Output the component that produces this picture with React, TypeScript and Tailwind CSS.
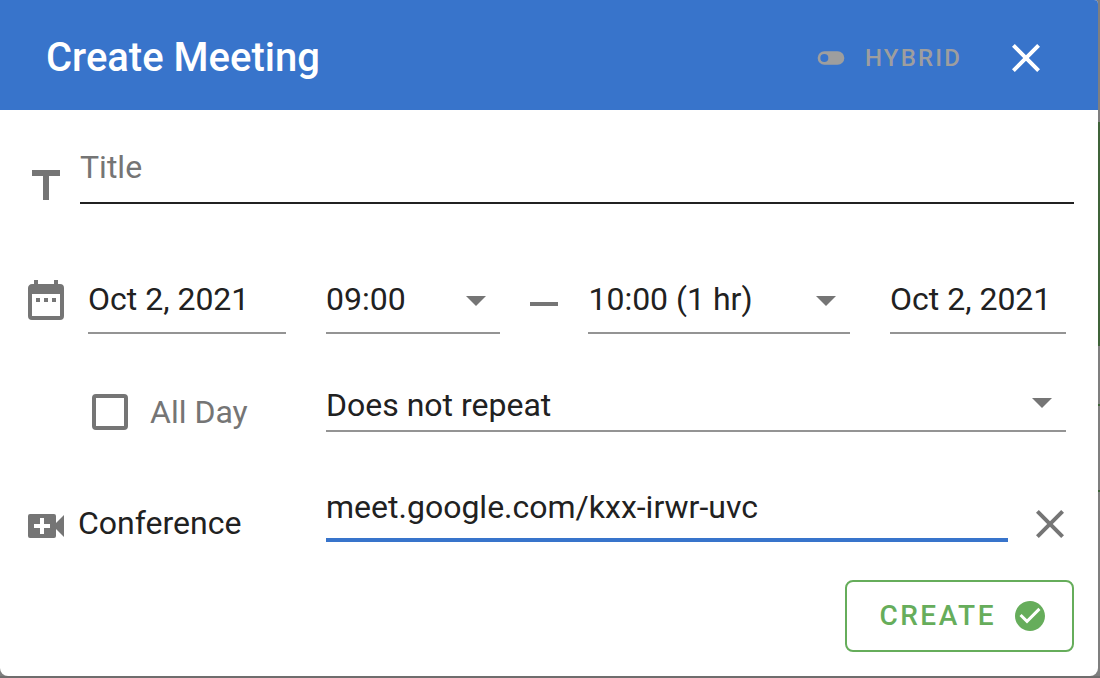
import { useState } from 'react';
import type { ReactNode } from 'react';
import clsx from 'clsx';

const ICONS = {
  close: 'M19,6.41L17.59,5L12,10.59L6.41,5L5,6.41L10.59,12L5,17.59L6.41,19L12,13.41L17.59,19L19,17.59L13.41,12L19,6.41Z',
  toggleOff: 'M17,7H7A5,5 0 0,0 2,12A5,5 0 0,0 7,17H17A5,5 0 0,0 22,12A5,5 0 0,0 17,7M7,15A3,3 0 0,1 4,12A3,3 0 0,1 7,9A3,3 0 0,1 10,12A3,3 0 0,1 7,15Z',
  title: 'M5,4V7H10.5V19H13.5V7H19V4H5Z',
  calendar: 'M9,10H7V12H9V10M13,10H11V12H13V10M17,10H15V12H17V10M19,3H18V1H16V3H8V1H6V3H5C3.89,3 3,3.9 3,5V19A2,2 0 0,0 5,21H19A2,2 0 0,0 21,19V5A2,2 0 0,0 19,3M19,19H5V8H19V19Z',
  minus: 'M19,13H5V11H19V13Z',
  menuDown: 'M7,10L12,15L17,10H7Z',
  videoPlus: 'M17,10.5V7A1,1 0 0,0 16,6H4A1,1 0 0,0 3,7V17A1,1 0 0,0 4,18H16A1,1 0 0,0 17,17V13.5L21,17.5V6.5L17,10.5M14,13H11V16H9V13H6V11H9V8H11V11H14V13Z',
  checkCircle: 'M12 2C6.5 2 2 6.5 2 12S6.5 22 12 22 22 17.5 22 12 17.5 2 12 2M10 17L5 12L6.41 10.59L10 14.17L17.59 6.58L19 8L10 17Z',
};

function Icon({ name, className = 'size-12' }: { name: keyof typeof ICONS; className?: string }) {
  return (
    <svg viewBox="0 0 24 24" fill="currentColor" aria-hidden="true" className={clsx('shrink-0', className)}>
      <path d={ICONS[name]} />
    </svg>
  );
}

interface SelectFieldProps {
  label: string;
  options: string[];
  className: string;
  selectClass: string;
  arrowClass: string;
}

function SelectField({ label, options, className, selectClass, arrowClass }: SelectFieldProps) {
  return (
    <div className={clsx('grid min-w-0', className)}>
      <select
        aria-label={label}
        className={clsx('col-start-1 row-start-1 w-full appearance-none border-b-2 border-[#949494] outline-none', selectClass)}
      >
        {options.map(o => <option key={o}>{o}</option>)}
      </select>
      <span className={clsx('pointer-events-none col-start-1 row-start-1 flex items-center self-start justify-self-end text-[#757575]', arrowClass)}>
        <Icon name="menuDown" />
      </span>
    </div>
  );
}

function IconButton({ label, className, children }: { label: string; className: string; children: ReactNode }) {
  return (
    <button type="button" aria-label={label} className={clsx('shrink-0 cursor-pointer', className)}>
      {children}
    </button>
  );
}

export default function App() {
  const [title, setTitle] = useState('');
  const [startDate, setStartDate] = useState('Oct 2, 2021');
  const [endDate, setEndDate] = useState('Oct 2, 2021');
  const [allDay, setAllDay] = useState(false);
  const [link, setLink] = useState('meet.google.com/kxx-irwr-uvc');

  return (
    <div className="flex min-h-screen border-b-2 border-[#6f6d6d] bg-[#7f7f7f] font-['Roboto',sans-serif] text-[32px] leading-[38px] text-[#212121]">
      <form
        role="dialog"
        aria-label="Create Meeting"
        className="flex-1 min-w-0 overflow-hidden rounded-b-lg rounded-tr-sm bg-white"
        onSubmit={e => e.preventDefault()}
      >
        <header className="flex h-[110px] items-center bg-[#3874cb] pl-[46px] pr-12 pt-1.5 text-white">
          <h1 className="flex-1 text-[40px] font-medium leading-12">Create Meeting</h1>
          <button type="button" disabled className="flex items-center gap-[18px] text-[24px] font-medium tracking-[0.09em] text-[#9e9e9e]">
            <Icon name="toggleOff" className="size-8" />
            HYBRID
          </button>
          <IconButton label="Close" className="ml-10">
            <Icon name="close" />
          </IconButton>
        </header>

        <div className="flex flex-col pb-6 pl-[22px] pr-6 pt-9 text-[#757575]">
          {/* Title */}
          <div className="flex items-start gap-2.5">
            <div className="pt-4"><Icon name="title" /></div>
            <input
              type="text"
              aria-label="Title"
              placeholder="Title"
              value={title}
              onChange={e => setTitle(e.target.value)}
              className="h-[58px] min-w-0 flex-1 border-b-2 border-[#212121] pb-3.5 text-[#212121] outline-none placeholder:text-[#757575]"
            />
          </div>

          {/* Date and time range */}
          <div className="mt-[68px] flex items-start pr-2">
            <Icon name="calendar" />
            <div className="ml-[18px] flex min-w-0 flex-1 items-start pt-0.5 text-[#212121]">
              <input
                type="text"
                aria-label="Start date"
                value={startDate}
                onChange={e => setStartDate(e.target.value)}
                className="h-[54px] w-[198px] border-b-2 border-[#949494] pb-3.5 outline-none"
              />
              <SelectField
                label="Start time"
                options={['09:00', '09:30', '10:00']}
                className="ml-10 flex-[2]"
                selectClass="h-[54px] pb-3.5"
                arrowClass="h-10"
              />
              <span className="mx-5 text-[#757575]"><Icon name="minus" /></span>
              <SelectField
                label="End time"
                options={['10:00 (1 hr)', '10:30 (1.5 hrs)', '11:00 (2 hrs)']}
                className="flex-[3]"
                selectClass="h-[54px] pb-3.5"
                arrowClass="h-10"
              />
              <input
                type="text"
                aria-label="End date"
                value={endDate}
                onChange={e => setEndDate(e.target.value)}
                className="ml-10 h-[54px] w-[176px] border-b-2 border-[#949494] pb-3.5 outline-none"
              />
            </div>
          </div>

          {/* Recurrence */}
          <div className="mt-[52px] flex items-start gap-10 pl-[66px] pr-2">
            <div className="w-[198px] pl-1 pt-2">
              <label className="flex h-9 items-center gap-[22px]">
                <input
                  type="checkbox"
                  checked={allDay}
                  onChange={e => setAllDay(e.target.checked)}
                  className="size-9 appearance-none rounded-sm border-4 border-[#757575] checked:bg-[#757575]"
                />
                All Day
              </label>
            </div>
            <SelectField
              label="Repeat"
              options={['Does not repeat', 'Daily', 'Weekly', 'Monthly']}
              className="flex-1 text-[#212121]"
              selectClass="h-[46px] pb-1.5"
              arrowClass="h-8"
            />
          </div>

          {/* Conference link */}
          <div className="mt-14 flex items-start">
            <div className="flex w-[304px] items-start gap-2 pt-3.5">
              <Icon name="videoPlus" />
              <label htmlFor="conference" className="leading-[42px] text-[#212121]">Conference</label>
            </div>
            <input
              id="conference"
              type="text"
              value={link}
              onChange={e => setLink(e.target.value)}
              className="h-[54px] min-w-0 flex-1 border-b-4 border-[#3874cb] pb-3 text-[#212121] outline-none"
            />
            <IconButton label="Remove conference" className="ml-[18px] pt-3">
              <Icon name="close" />
            </IconButton>
          </div>

          <button
            type="submit"
            className="mt-[30px] flex h-[72px] cursor-pointer items-center gap-4 self-end rounded-lg border-2 border-[#66ad5b] pl-8 pr-6 text-[28px] font-medium tracking-[0.09em] text-[#66ad5b]"
          >
            CREATE
            <Icon name="checkCircle" className="size-9" />
          </button>
        </div>
      </form>

      {/* Edge of the calendar grid behind the dialog */}
      <div className="flex w-0.5 flex-col" aria-hidden="true">
        <div className="h-[122px] bg-[#7f7f7f]" />
        <div className="h-[224px] bg-[#3f6339]" />
        <div className="h-[58px]" />
        <div className="h-0.5 bg-[#3f6339]" />
        <div className="h-[84px]" />
        <div className="h-0.5 bg-[#3f6339]" />
      </div>
    </div>
  );
}
